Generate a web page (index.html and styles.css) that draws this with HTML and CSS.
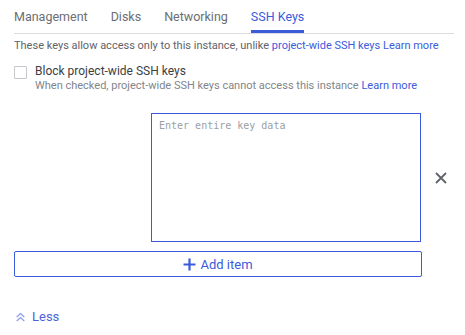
FILE: index.html
```html
<!DOCTYPE html>
<html lang="en">

<head>
    <meta charset="UTF-8">
    <meta name="viewport" content="width=device-width, initial-scale=1.0">
    <title>SSH Keys</title>
    <link rel="stylesheet" href="styles.css">
</head>

<body>
    <div class="tabs">
        <div class="tab">Management</div>
        <div class="tab">Disks</div>
        <div class="tab">Networking</div>
        <div class="tab active">SSH Keys</div>
    </div>

    <p class="intro">These keys allow access only to this instance, unlike <a href="#">project-wide SSH keys</a> <a href="#">Learn more</a></p>

    <label class="check">
        <span class="box"></span>
        <span class="check-text">
            <span class="check-label">Block project-wide SSH keys</span>
            <span class="check-hint">When checked, project-wide SSH keys cannot access this instance <a href="#">Learn more</a></span>
        </span>
    </label>

    <div class="key-row">
        <textarea class="key-input" placeholder="Enter entire key data"></textarea>
        <button class="remove" aria-label="Remove">
            <svg width="12" height="12" viewBox="0 0 12 12">
                <path d="M1 1L11 11M11 1L1 11" stroke="#5f6368" stroke-width="1.8" fill="none" />
            </svg>
        </button>
    </div>

    <button class="add-item">
        <svg width="13" height="13" viewBox="0 0 13 13">
            <path d="M6.5 0.5V12.5M0.5 6.5H12.5" stroke="#3b5bdb" stroke-width="2.2" fill="none" />
        </svg>
        Add item
    </button>

    <a class="less" href="#">
        <svg width="9" height="10" viewBox="0 0 9 10">
            <path d="M0.7 5L4.5 1.5L8.3 5M0.7 9L4.5 5.5L8.3 9" stroke="#8a9be6" stroke-width="1.2" fill="none" />
        </svg>
        Less
    </a>
</body>

</html>
```

FILE: styles.css
```css
* {
    padding: 0;
    margin: 0;
    box-sizing: border-box;
    font-family: Roboto, "Liberation Sans", sans-serif;
}

body {
    background-color: #ffffff;
    padding: 0 11px 0 14px;
    color: #202124;
}

a {
    color: #3b5bdb;
    text-decoration: none;
}

.tabs {
    display: flex;
    gap: 23px;
    border-bottom: 1px solid #dadce0;
}

.tab {
    font-size: 12.5px;
    line-height: 16px;
    padding: 9px 0 5px;
    color: #6b6e72;
    border-bottom: 3px solid transparent;
}

.tab.active {
    color: #3b5bdb;
    border-bottom-color: #3b5bdb;
}

.intro {
    margin-top: 5px;
    font-size: 11px;
    line-height: 14px;
    color: #5f6368;
}

.check {
    display: flex;
    gap: 8px;
    margin-top: 10px;
}

.box {
    flex: none;
    width: 13px;
    height: 13px;
    margin-top: 3px;
    border: 1px solid #c4c7cc;
    border-radius: 1px;
}

.check-text {
    display: flex;
    flex-direction: column;
}

.check-label {
    font-size: 12px;
    line-height: 16px;
    color: #3c4043;
}

.check-hint {
    font-size: 11px;
    line-height: 14px;
    color: #80868b;
}

.key-row {
    display: flex;
    align-items: center;
    margin: 20px 0 0 137px;
}

.key-input {
    width: 270px;
    height: 129px;
    border: 1px solid #3b5bdb;
    padding: 5px 7px;
    resize: none;
    outline: none;
    font-family: "DejaVu Sans Mono", monospace;
    font-size: 10px;
    line-height: 13px;
}

.key-input::placeholder {
    color: #9aa0a6;
}

.remove {
    display: flex;
    border: none;
    background: none;
    margin-left: 14px;
}

.add-item {
    display: flex;
    align-items: center;
    justify-content: center;
    gap: 4px;
    width: 408px;
    height: 26px;
    margin-top: 9px;
    border: 1px solid #3b5bdb;
    border-radius: 2px;
    background: #ffffff;
    color: #3b5bdb;
    font-size: 13px;
}

.less {
    display: inline-flex;
    align-items: center;
    gap: 7px;
    margin-top: 32px;
    padding-left: 2px;
    font-size: 13px;
    line-height: 16px;
    color: #4a64d8;
}
```
